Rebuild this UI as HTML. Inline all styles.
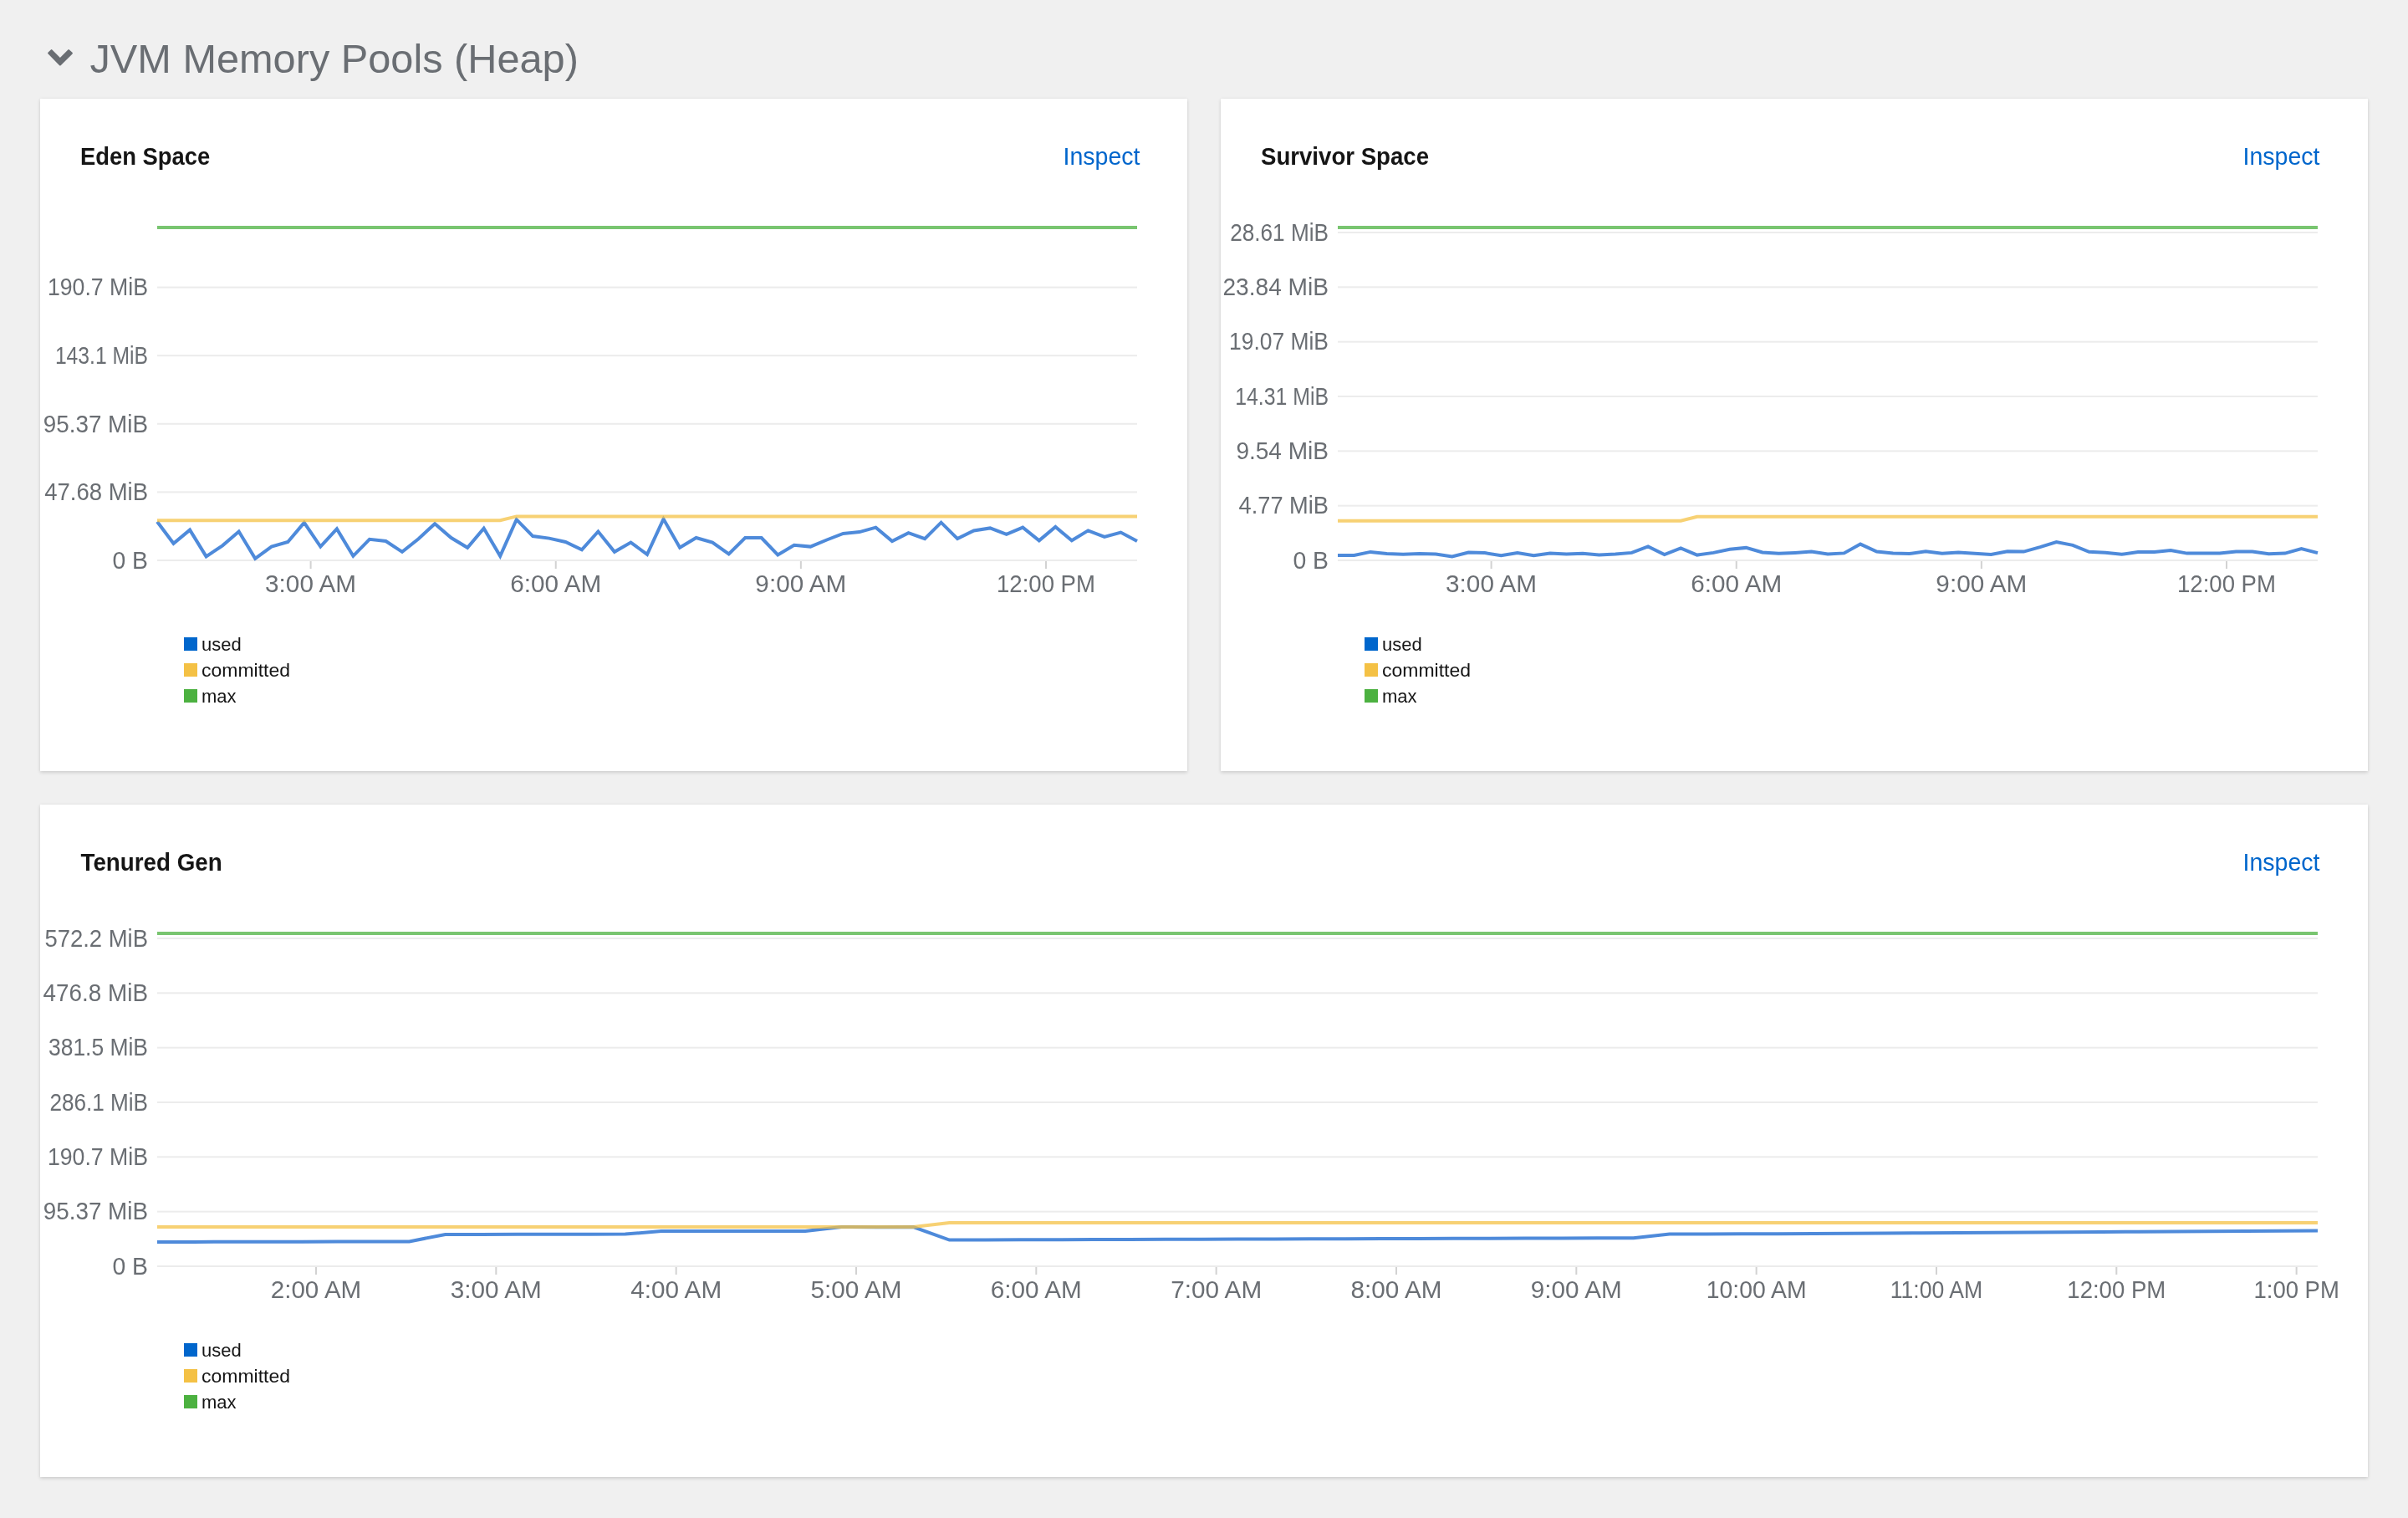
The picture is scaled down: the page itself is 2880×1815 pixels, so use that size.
<!DOCTYPE html>
<html><head><meta charset="utf-8"><title>JVM Memory Pools (Heap)</title>
<style>
html,body{margin:0;padding:0;}
body{width:2880px;height:1815px;overflow:hidden;background:#f0f0f0;position:relative;font-family:"Liberation Sans",sans-serif;}
.card{position:absolute;background:#fff;box-shadow:0 2px 4px 0 rgba(3,3,3,.12),0 0 4px 0 rgba(3,3,3,.06);}
.ttl{position:absolute;left:0;top:0;white-space:nowrap;}
svg.ov{position:absolute;left:0;top:0;will-change:transform;}
.yl{font-family:"Liberation Sans",sans-serif;font-size:29px;fill:#6a6e73;text-anchor:end;}
.xl{font-family:"Liberation Sans",sans-serif;font-size:29px;fill:#6a6e73;text-anchor:middle;}
.lg{font-family:"Liberation Sans",sans-serif;font-size:22px;fill:#151515;}
.ct{font-family:"Liberation Sans",sans-serif;font-size:28.6px;font-weight:bold;fill:#151515;}
.ins{font-family:"Liberation Sans",sans-serif;font-size:29.2px;fill:#0066cc;text-anchor:end;}
.h1{font-family:"Liberation Sans",sans-serif;font-size:48.7px;fill:#6a6e73;}
</style></head><body>
<div class="card" style="left:48px;top:118px;width:1372px;height:804px"></div>
<div class="card" style="left:1460px;top:118px;width:1372px;height:804px"></div>
<div class="card" style="left:48px;top:962px;width:2784px;height:804px"></div>
<svg class="ov" width="2880" height="1815" viewBox="0 0 2880 1815">
<path d="M61.6,60.2 L71.9,70.6 L82.1,60.2 L85.8,63.6 L71.9,77.4 L58.2,63.6 Z" fill="#6a6e73" stroke="#6a6e73" stroke-width="2.2" stroke-linejoin="round"/>
<text x="107.5" y="86.7" class="h1">JVM Memory Pools (Heap)</text>
<text x="96" y="197" class="ct" textLength="155.3" lengthAdjust="spacingAndGlyphs">Eden Space</text>
<text x="1363.5" y="197" class="ins" textLength="92" lengthAdjust="spacingAndGlyphs">Inspect</text>
<text x="1508" y="197" class="ct" textLength="201" lengthAdjust="spacingAndGlyphs">Survivor Space</text>
<text x="2774.5" y="197" class="ins" textLength="92" lengthAdjust="spacingAndGlyphs">Inspect</text>
<text x="96.5" y="1041" class="ct" textLength="169.3" lengthAdjust="spacingAndGlyphs">Tenured Gen</text>
<text x="2774.5" y="1041" class="ins" textLength="92" lengthAdjust="spacingAndGlyphs">Inspect</text>
<rect x="188" y="669.00" width="1172" height="2" fill="#ececec"/>
<text x="177.00" y="679.70" class="yl" textLength="42.6" lengthAdjust="spacingAndGlyphs">0 B</text>
<rect x="188" y="587.40" width="1172" height="2" fill="#ececec"/>
<text x="177.00" y="598.10" class="yl" textLength="123.8" lengthAdjust="spacingAndGlyphs">47.68 MiB</text>
<rect x="188" y="505.80" width="1172" height="2" fill="#ececec"/>
<text x="177.00" y="516.50" class="yl" textLength="125.19999999999999" lengthAdjust="spacingAndGlyphs">95.37 MiB</text>
<rect x="188" y="424.20" width="1172" height="2" fill="#ececec"/>
<text x="177.00" y="434.90" class="yl" textLength="111.1" lengthAdjust="spacingAndGlyphs">143.1 MiB</text>
<rect x="188" y="342.60" width="1172" height="2" fill="#ececec"/>
<text x="177.00" y="353.30" class="yl" textLength="120.1" lengthAdjust="spacingAndGlyphs">190.7 MiB</text>
<rect x="370.60" y="671" width="2" height="9" fill="#d2d2d2"/>
<text x="371.60" y="708.00" class="xl" textLength="109" lengthAdjust="spacingAndGlyphs">3:00 AM</text>
<rect x="663.73" y="671" width="2" height="9" fill="#d2d2d2"/>
<text x="664.73" y="708.00" class="xl" textLength="109" lengthAdjust="spacingAndGlyphs">6:00 AM</text>
<rect x="956.86" y="671" width="2" height="9" fill="#d2d2d2"/>
<text x="957.86" y="708.00" class="xl" textLength="109" lengthAdjust="spacingAndGlyphs">9:00 AM</text>
<rect x="1249.99" y="671" width="2" height="9" fill="#d2d2d2"/>
<text x="1250.99" y="708.00" class="xl" textLength="118" lengthAdjust="spacingAndGlyphs">12:00 PM</text>
<polyline points="188.00,623.70 207.53,649.80 227.07,633.60 246.60,665.40 266.13,652.30 285.67,635.50 305.20,667.90 324.73,653.60 344.27,648.00 363.80,624.90 383.33,653.60 402.87,632.40 422.40,664.80 441.93,644.80 461.47,647.00 481.00,659.80 500.53,644.20 520.07,626.20 539.60,643.00 559.13,654.80 578.67,631.80 598.20,664.80 617.73,621.20 637.27,641.10 656.80,643.60 676.33,648.00 695.87,657.30 715.40,635.50 734.93,659.80 754.47,648.60 774.00,662.90 793.53,620.60 813.07,654.80 832.60,643.00 852.13,648.60 871.67,662.30 891.20,643.00 910.73,643.00 930.27,663.50 949.80,651.70 969.33,653.60 988.87,645.50 1008.40,638.00 1027.93,636.10 1047.47,630.60 1067.00,647.10 1086.53,637.10 1106.07,644.10 1125.60,624.70 1145.13,644.10 1164.67,634.40 1184.20,631.40 1203.73,638.90 1223.27,630.60 1242.80,646.30 1262.33,629.90 1281.87,646.30 1301.40,634.40 1320.93,641.90 1340.47,636.60 1360.00,647.10" fill="none" stroke="#1363ce" stroke-opacity="0.75" stroke-width="4" stroke-linejoin="miter"/>
<polyline points="188.00,622.20 207.53,622.20 227.07,622.20 246.60,622.20 266.13,622.20 285.67,622.20 305.20,622.20 324.73,622.20 344.27,622.20 363.80,622.20 383.33,622.20 402.87,622.20 422.40,622.20 441.93,622.20 461.47,622.20 481.00,622.20 500.53,622.20 520.07,622.20 539.60,622.20 559.13,622.20 578.67,622.20 598.20,622.20 617.73,617.40 637.27,617.40 656.80,617.40 676.33,617.40 695.87,617.40 715.40,617.40 734.93,617.40 754.47,617.40 774.00,617.40 793.53,617.40 813.07,617.40 832.60,617.40 852.13,617.40 871.67,617.40 891.20,617.40 910.73,617.40 930.27,617.40 949.80,617.40 969.33,617.40 988.87,617.40 1008.40,617.40 1027.93,617.40 1047.47,617.40 1067.00,617.40 1086.53,617.40 1106.07,617.40 1125.60,617.40 1145.13,617.40 1164.67,617.40 1184.20,617.40 1203.73,617.40 1223.27,617.40 1242.80,617.40 1262.33,617.40 1281.87,617.40 1301.40,617.40 1320.93,617.40 1340.47,617.40 1360.00,617.40" fill="none" stroke="#f4c145" stroke-opacity="0.75" stroke-width="4"/>
<rect x="188" y="270" width="1172" height="4" fill="#4cb140" fill-opacity="0.75"/>
<rect x="220" y="762" width="16" height="16" fill="#0066cc"/>
<text x="241" y="777.5" class="lg">used</text>
<rect x="220" y="793" width="16" height="16" fill="#f4c145"/>
<text x="241" y="808.5" class="lg" textLength="106" lengthAdjust="spacingAndGlyphs">committed</text>
<rect x="220" y="824" width="16" height="16" fill="#4cb140"/>
<text x="241" y="839.5" class="lg">max</text>
<rect x="1600" y="669.00" width="1172" height="2" fill="#ececec"/>
<text x="1589.00" y="679.70" class="yl" textLength="42.6" lengthAdjust="spacingAndGlyphs">0 B</text>
<rect x="1600" y="603.67" width="1172" height="2" fill="#ececec"/>
<text x="1589.00" y="614.37" class="yl" textLength="107.39999999999999" lengthAdjust="spacingAndGlyphs">4.77 MiB</text>
<rect x="1600" y="538.34" width="1172" height="2" fill="#ececec"/>
<text x="1589.00" y="549.04" class="yl" textLength="110.6" lengthAdjust="spacingAndGlyphs">9.54 MiB</text>
<rect x="1600" y="473.01" width="1172" height="2" fill="#ececec"/>
<text x="1589.00" y="483.71" class="yl" textLength="111.8" lengthAdjust="spacingAndGlyphs">14.31 MiB</text>
<rect x="1600" y="407.68" width="1172" height="2" fill="#ececec"/>
<text x="1589.00" y="418.38" class="yl" textLength="119.0" lengthAdjust="spacingAndGlyphs">19.07 MiB</text>
<rect x="1600" y="342.35" width="1172" height="2" fill="#ececec"/>
<text x="1589.00" y="353.05" class="yl" textLength="126.5" lengthAdjust="spacingAndGlyphs">23.84 MiB</text>
<rect x="1600" y="277.02" width="1172" height="2" fill="#ececec"/>
<text x="1589.00" y="287.72" class="yl" textLength="117.8" lengthAdjust="spacingAndGlyphs">28.61 MiB</text>
<rect x="1782.60" y="671" width="2" height="9" fill="#d2d2d2"/>
<text x="1783.60" y="708.00" class="xl" textLength="109" lengthAdjust="spacingAndGlyphs">3:00 AM</text>
<rect x="2075.73" y="671" width="2" height="9" fill="#d2d2d2"/>
<text x="2076.73" y="708.00" class="xl" textLength="109" lengthAdjust="spacingAndGlyphs">6:00 AM</text>
<rect x="2368.86" y="671" width="2" height="9" fill="#d2d2d2"/>
<text x="2369.86" y="708.00" class="xl" textLength="109" lengthAdjust="spacingAndGlyphs">9:00 AM</text>
<rect x="2661.99" y="671" width="2" height="9" fill="#d2d2d2"/>
<text x="2662.99" y="708.00" class="xl" textLength="118" lengthAdjust="spacingAndGlyphs">12:00 PM</text>
<polyline points="1600.00,663.90 1619.53,663.90 1639.07,659.90 1658.60,662.00 1678.13,662.80 1697.67,662.00 1717.20,662.60 1736.73,665.50 1756.27,660.50 1775.80,661.10 1795.33,664.30 1814.87,661.10 1834.40,664.30 1853.93,661.40 1873.47,662.60 1893.00,661.80 1912.53,663.40 1932.07,662.40 1951.60,660.90 1971.13,653.40 1990.67,663.00 2010.20,655.50 2029.73,663.60 2049.27,660.90 2068.80,656.80 2088.33,654.90 2107.87,660.50 2127.40,661.80 2146.93,660.90 2166.47,659.60 2186.00,662.60 2205.53,661.40 2225.07,650.60 2244.60,659.60 2264.13,661.40 2283.67,662.10 2303.20,659.30 2322.73,661.80 2342.27,660.50 2361.80,661.80 2381.33,663.00 2400.87,659.30 2420.40,659.60 2439.93,654.10 2459.47,648.10 2479.00,651.90 2498.53,659.80 2518.07,660.80 2537.60,662.80 2557.13,660.10 2576.67,660.10 2596.20,658.10 2615.73,661.60 2635.27,661.60 2654.80,661.60 2674.33,659.60 2693.87,659.60 2713.40,662.30 2732.93,661.60 2752.47,656.00 2772.00,661.10" fill="none" stroke="#1363ce" stroke-opacity="0.75" stroke-width="4" stroke-linejoin="miter"/>
<polyline points="1600.00,622.80 1619.53,622.80 1639.07,622.80 1658.60,622.80 1678.13,622.80 1697.67,622.80 1717.20,622.80 1736.73,622.80 1756.27,622.80 1775.80,622.80 1795.33,622.80 1814.87,622.80 1834.40,622.80 1853.93,622.80 1873.47,622.80 1893.00,622.80 1912.53,622.80 1932.07,622.80 1951.60,622.80 1971.13,622.80 1990.67,622.80 2010.20,622.80 2029.73,617.80 2049.27,617.80 2068.80,617.80 2088.33,617.80 2107.87,617.80 2127.40,617.80 2146.93,617.80 2166.47,617.80 2186.00,617.80 2205.53,617.80 2225.07,617.80 2244.60,617.80 2264.13,617.80 2283.67,617.80 2303.20,617.80 2322.73,617.80 2342.27,617.80 2361.80,617.80 2381.33,617.80 2400.87,617.80 2420.40,617.80 2439.93,617.80 2459.47,617.80 2479.00,617.80 2498.53,617.80 2518.07,617.80 2537.60,617.80 2557.13,617.80 2576.67,617.80 2596.20,617.80 2615.73,617.80 2635.27,617.80 2654.80,617.80 2674.33,617.80 2693.87,617.80 2713.40,617.80 2732.93,617.80 2752.47,617.80 2772.00,617.80" fill="none" stroke="#f4c145" stroke-opacity="0.75" stroke-width="4"/>
<rect x="1600" y="270" width="1172" height="4" fill="#4cb140" fill-opacity="0.75"/>
<rect x="1632" y="762" width="16" height="16" fill="#0066cc"/>
<text x="1653" y="777.5" class="lg">used</text>
<rect x="1632" y="793" width="16" height="16" fill="#f4c145"/>
<text x="1653" y="808.5" class="lg" textLength="106" lengthAdjust="spacingAndGlyphs">committed</text>
<rect x="1632" y="824" width="16" height="16" fill="#4cb140"/>
<text x="1653" y="839.5" class="lg">max</text>
<rect x="188" y="1513.00" width="2584" height="2" fill="#ececec"/>
<text x="177.00" y="1523.70" class="yl" textLength="42.6" lengthAdjust="spacingAndGlyphs">0 B</text>
<rect x="188" y="1447.67" width="2584" height="2" fill="#ececec"/>
<text x="177.00" y="1458.37" class="yl" textLength="125.19999999999999" lengthAdjust="spacingAndGlyphs">95.37 MiB</text>
<rect x="188" y="1382.34" width="2584" height="2" fill="#ececec"/>
<text x="177.00" y="1393.04" class="yl" textLength="120.1" lengthAdjust="spacingAndGlyphs">190.7 MiB</text>
<rect x="188" y="1317.01" width="2584" height="2" fill="#ececec"/>
<text x="177.00" y="1327.71" class="yl" textLength="117.6" lengthAdjust="spacingAndGlyphs">286.1 MiB</text>
<rect x="188" y="1251.68" width="2584" height="2" fill="#ececec"/>
<text x="177.00" y="1262.38" class="yl" textLength="119.0" lengthAdjust="spacingAndGlyphs">381.5 MiB</text>
<rect x="188" y="1186.35" width="2584" height="2" fill="#ececec"/>
<text x="177.00" y="1197.05" class="yl" textLength="125.39999999999999" lengthAdjust="spacingAndGlyphs">476.8 MiB</text>
<rect x="188" y="1121.02" width="2584" height="2" fill="#ececec"/>
<text x="177.00" y="1131.72" class="yl" textLength="123.6" lengthAdjust="spacingAndGlyphs">572.2 MiB</text>
<rect x="377.00" y="1515" width="2" height="9" fill="#d2d2d2"/>
<text x="378.00" y="1552.00" class="xl" textLength="108.5" lengthAdjust="spacingAndGlyphs">2:00 AM</text>
<rect x="592.33" y="1515" width="2" height="9" fill="#d2d2d2"/>
<text x="593.33" y="1552.00" class="xl" textLength="109" lengthAdjust="spacingAndGlyphs">3:00 AM</text>
<rect x="807.66" y="1515" width="2" height="9" fill="#d2d2d2"/>
<text x="808.66" y="1552.00" class="xl" textLength="109" lengthAdjust="spacingAndGlyphs">4:00 AM</text>
<rect x="1022.99" y="1515" width="2" height="9" fill="#d2d2d2"/>
<text x="1023.99" y="1552.00" class="xl" textLength="109" lengthAdjust="spacingAndGlyphs">5:00 AM</text>
<rect x="1238.32" y="1515" width="2" height="9" fill="#d2d2d2"/>
<text x="1239.32" y="1552.00" class="xl" textLength="109" lengthAdjust="spacingAndGlyphs">6:00 AM</text>
<rect x="1453.65" y="1515" width="2" height="9" fill="#d2d2d2"/>
<text x="1454.65" y="1552.00" class="xl" textLength="109" lengthAdjust="spacingAndGlyphs">7:00 AM</text>
<rect x="1668.98" y="1515" width="2" height="9" fill="#d2d2d2"/>
<text x="1669.98" y="1552.00" class="xl" textLength="109" lengthAdjust="spacingAndGlyphs">8:00 AM</text>
<rect x="1884.31" y="1515" width="2" height="9" fill="#d2d2d2"/>
<text x="1885.31" y="1552.00" class="xl" textLength="109" lengthAdjust="spacingAndGlyphs">9:00 AM</text>
<rect x="2099.64" y="1515" width="2" height="9" fill="#d2d2d2"/>
<text x="2100.64" y="1552.00" class="xl" textLength="119.9" lengthAdjust="spacingAndGlyphs">10:00 AM</text>
<rect x="2314.97" y="1515" width="2" height="9" fill="#d2d2d2"/>
<text x="2315.97" y="1552.00" class="xl" textLength="110.4" lengthAdjust="spacingAndGlyphs">11:00 AM</text>
<rect x="2530.30" y="1515" width="2" height="9" fill="#d2d2d2"/>
<text x="2531.30" y="1552.00" class="xl" textLength="118" lengthAdjust="spacingAndGlyphs">12:00 PM</text>
<rect x="2745.63" y="1515" width="2" height="9" fill="#d2d2d2"/>
<text x="2746.63" y="1552.00" class="xl" textLength="102.3" lengthAdjust="spacingAndGlyphs">1:00 PM</text>
<polyline points="188.00,1485.00 231.07,1484.91 274.13,1484.83 317.20,1484.74 360.27,1484.66 403.33,1484.57 446.40,1484.49 489.47,1484.40 532.53,1476.00 575.60,1475.92 618.67,1475.84 661.73,1475.76 704.80,1475.68 747.87,1475.60 790.93,1472.00 834.00,1472.00 877.07,1472.00 920.13,1472.00 963.20,1472.00 1006.27,1467.00 1049.33,1467.30 1092.40,1467.00 1135.47,1482.60 1178.53,1482.47 1221.60,1482.35 1264.67,1482.22 1307.73,1482.09 1350.80,1481.97 1393.87,1481.84 1436.93,1481.72 1480.00,1481.59 1523.07,1481.46 1566.13,1481.34 1609.20,1481.21 1652.27,1481.08 1695.33,1480.96 1738.40,1480.83 1781.47,1480.71 1824.53,1480.58 1867.60,1480.45 1910.67,1480.33 1953.73,1480.20 1996.80,1475.60 2039.87,1475.60 2082.93,1475.36 2126.00,1475.13 2169.07,1474.89 2212.13,1474.66 2255.20,1474.42 2298.27,1474.19 2341.33,1473.95 2384.40,1473.72 2427.47,1473.48 2470.53,1473.25 2513.60,1473.01 2556.67,1472.78 2599.73,1472.54 2642.80,1472.31 2685.87,1472.07 2728.93,1471.84 2772.00,1471.60" fill="none" stroke="#1363ce" stroke-opacity="0.75" stroke-width="4" stroke-linejoin="miter"/>
<polyline points="188.00,1467.00 231.07,1467.00 274.13,1467.00 317.20,1467.00 360.27,1467.00 403.33,1467.00 446.40,1467.00 489.47,1467.00 532.53,1467.00 575.60,1467.00 618.67,1467.00 661.73,1467.00 704.80,1467.00 747.87,1467.00 790.93,1467.00 834.00,1467.00 877.07,1467.00 920.13,1467.00 963.20,1467.00 1006.27,1467.00 1049.33,1467.00 1092.40,1467.00 1135.47,1462.00 1178.53,1462.00 1221.60,1462.00 1264.67,1462.00 1307.73,1462.00 1350.80,1462.00 1393.87,1462.00 1436.93,1462.00 1480.00,1462.00 1523.07,1462.00 1566.13,1462.00 1609.20,1462.00 1652.27,1462.00 1695.33,1462.00 1738.40,1462.00 1781.47,1462.00 1824.53,1462.00 1867.60,1462.00 1910.67,1462.00 1953.73,1462.00 1996.80,1462.00 2039.87,1462.00 2082.93,1462.00 2126.00,1462.00 2169.07,1462.00 2212.13,1462.00 2255.20,1462.00 2298.27,1462.00 2341.33,1462.00 2384.40,1462.00 2427.47,1462.00 2470.53,1462.00 2513.60,1462.00 2556.67,1462.00 2599.73,1462.00 2642.80,1462.00 2685.87,1462.00 2728.93,1462.00 2772.00,1462.00" fill="none" stroke="#f4c145" stroke-opacity="0.75" stroke-width="4"/>
<rect x="188" y="1114" width="2584" height="4" fill="#4cb140" fill-opacity="0.75"/>
<rect x="220" y="1606" width="16" height="16" fill="#0066cc"/>
<text x="241" y="1621.5" class="lg">used</text>
<rect x="220" y="1637" width="16" height="16" fill="#f4c145"/>
<text x="241" y="1652.5" class="lg" textLength="106" lengthAdjust="spacingAndGlyphs">committed</text>
<rect x="220" y="1668" width="16" height="16" fill="#4cb140"/>
<text x="241" y="1683.5" class="lg">max</text>
</svg>
</body></html>
